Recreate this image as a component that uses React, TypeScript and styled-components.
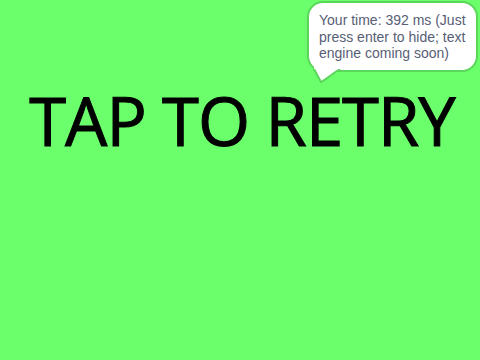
import React from 'react';
import styled, { createGlobalStyle } from 'styled-components';

const GlobalStyle = createGlobalStyle`
  html, body {
    margin: 0;
    padding: 0;
    background: #6bff6b;
  }
`;

const Stage = styled.div`
  position: relative;
  width: 480px;
  height: 360px;
  overflow: hidden;
  background: #6bff6b;
  display: flex;
  flex-direction: column;
  align-items: center;
`;

const RetryText = styled.h1`
  margin: 75px 0 0 4px;
  font-family: 'Open Sans', 'Noto Sans', sans-serif;
  font-weight: 400;
  font-size: 67px;
  line-height: 90px;
  color: #000000;
  -webkit-text-stroke: 1px #000000;
  letter-spacing: -1px;
  white-space: nowrap;
`;

const Bubble = styled.div`
  position: absolute;
  top: 1px;
  left: 307px;
  width: 171px;
  box-sizing: border-box;
  padding: 9px 10px 8px 10px;
  background: #ffffff;
  border: 2px solid #5ad65a;
  border-radius: 16px;
  font-family: 'Liberation Sans', Arial, sans-serif;
  font-size: 14px;
  line-height: 16.7px;
  color: #575e75;
`;

const Tail = styled.svg`
  position: absolute;
  left: 5px;
  bottom: -13px;
  overflow: visible;
`;

export default function App() {
  return (
    <>
      <GlobalStyle />
      <Stage>
        <RetryText>TAP TO RETRY</RetryText>
        <Bubble>
          Your time: 392 ms (Just press enter to hide; text engine coming soon)
          <Tail width="28" height="14" viewBox="0 0 28 14">
            <path
              d="M0 0 C 2 4, 5 9, 7 13 C 11 11, 18 5, 26 0"
              fill="#ffffff"
              stroke="#5ad65a"
              strokeWidth="2"
              strokeLinejoin="round"
            />
            <rect x="0" y="-3" width="27" height="3" fill="#ffffff" />
          </Tail>
        </Bubble>
      </Stage>
    </>
  );
}
